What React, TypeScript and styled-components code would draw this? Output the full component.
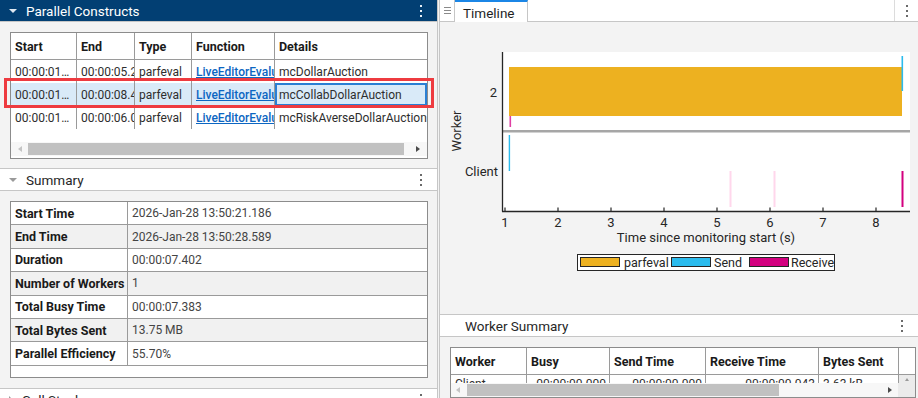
import React from 'react';
import styled, { createGlobalStyle } from 'styled-components';

const GlobalStyle = createGlobalStyle`
  html, body { margin: 0; padding: 0; background: #f3f3f3; overflow: hidden; }
  body { font-family: Roboto, "Liberation Sans", Arial, sans-serif; color: #212121; }
  * { box-sizing: border-box; }
`;

const Window = styled.div`
  display: flex;
  width: 918px;
  height: 398px;
  overflow: hidden;
  background: #f3f3f3;
`;

const LeftPanel = styled.div`
  width: 438px;
  flex-shrink: 0;
  display: flex;
  flex-direction: column;
  border-right: 1px solid #c6c6c6;
`;

const RightPanel = styled.div`
  flex: 1;
  margin-left: 1px;
  display: flex;
  flex-direction: column;
  border-left: 1px solid #c6c6c6;
  min-width: 0;
`;

const SectionHeader = styled.div<{ $active?: boolean }>`
  height: ${p => (p.$active ? 22 : 23)}px;
  flex-shrink: 0;
  display: flex;
  align-items: center;
  padding: 0 14px 0 9px;
  gap: 9px;
  background: ${p => (p.$active ? '#023f73' : '#ffffff')};
  color: ${p => (p.$active ? '#ffffff' : '#262626')};
  border-top: ${p => (p.$active ? 'none' : '1px solid #c6c6c6')};
  border-bottom: 1px solid #c6c6c6;
  font-size: 13.5px;
`;

const Title = styled.span<{ $indent?: number }>`
  flex: 1;
  padding-left: ${p => p.$indent ?? 0}px;
  white-space: nowrap;
`;

const Body = styled.div<{ $h?: number }>`
  position: relative;
  height: ${p => (p.$h ? `${p.$h}px` : 'auto')};
  flex-shrink: 0;
  padding: 10px 0 0 10px;
`;

const TableBox = styled.div<{ $w: number }>`
  width: ${p => p.$w}px;
  background: #ffffff;
  border: 1px solid #8c8c8c;
  font-size: 12px;
  overflow: hidden;
`;

const Row = styled.div<{ $cols: string; $h: number; $line?: boolean; $bg?: string }>`
  display: grid;
  grid-template-columns: ${p => p.$cols};
  height: ${p => p.$h}px;
  background: ${p => p.$bg ?? 'transparent'};
  border-bottom: ${p => (p.$line ? '1px solid #9a9a9a' : 'none')};
`;

const Cell = styled.div<{
  $head?: boolean;
  $right?: boolean;
  $last?: boolean;
  $focus?: boolean;
  $muted?: boolean;
  $clipTop?: boolean;
}>`
  display: flex;
  align-items: ${p => (p.$clipTop ? 'flex-start' : 'center')};
  justify-content: ${p => (p.$right ? 'flex-end' : 'flex-start')};
  padding: ${p => (p.$clipTop ? '2px 3px 0 4px' : '0 3px 0 4px')};
  overflow: hidden;
  white-space: nowrap;
  font-size: ${p => (p.$head ? '12.5px' : '12px')};
  font-weight: ${p => (p.$head ? 700 : 400)};
  color: ${p => (p.$head ? '#1a1a1a' : p.$muted ? '#444444' : '#2e2e2e')};
  border-right: ${p => (p.$last ? 'none' : '1px solid #9a9a9a')};
  outline: ${p => (p.$focus ? '2px solid #2a7fd4' : 'none')};
  outline-offset: -2px;
`;

const Link = styled.span`
  color: #0c66c2;
  text-decoration: underline;
  font-weight: 500;
`;

const Filler = styled.div<{ $h: number }>`
  height: ${p => p.$h}px;
`;

const HScroll = styled.div`
  position: relative;
  height: 14px;
  background: #f7f7f7;
  margin-bottom: 2px;
`;

const Thumb = styled.div<{ $left: number; $width: number }>`
  position: absolute;
  top: 1px;
  bottom: 1px;
  left: ${p => p.$left}px;
  width: ${p => p.$width}px;
  background: #c1c1c1;
`;

const Arrow = styled.div<{ $dir: 'left' | 'right'; $off: number; $dim?: boolean }>`
  position: absolute;
  top: 4px;
  ${p => (p.$dir === 'right' ? `right: ${p.$off}px;` : `left: ${p.$off}px;`)}
  width: 0;
  height: 0;
  border-style: solid;
  border-color: transparent;
  ${p =>
    p.$dir === 'left'
      ? `border-width: 3.5px 4px 3.5px 0; border-right-color: ${p.$dim ? '#c4c4c4' : '#5e5e5e'};`
      : `border-width: 3.5px 0 3.5px 4px; border-left-color: ${p.$dim ? '#c4c4c4' : '#4a4a4a'};`}
`;

const UpArrow = styled.div`
  margin: 3px auto 0;
  width: 0;
  height: 0;
  border-style: solid;
  border-color: transparent;
  border-width: 0 2.5px 3px 2.5px;
  border-bottom-color: #9a9a9a;
`;

const Highlight = styled.div`
  position: absolute;
  left: 4px;
  top: 56px;
  width: 430px;
  height: 30px;
  border: 3px solid #ee3b40;
  pointer-events: none;
`;

const Caret = styled.span<{ $open: boolean; $color: string }>`
  width: 0;
  height: 0;
  border-style: solid;
  border-color: transparent;
  ${p =>
    p.$open
      ? `border-width: 4px 4px 0 4px; border-top-color: ${p.$color};`
      : `border-width: 4px 0 4px 4px; border-left-color: ${p.$color};`}
  margin-top: 1px;
`;

const Kebab = ({ color }: { color: string }) => (
  <svg width="4" height="14" viewBox="0 0 4 14">
    <rect x="1" y="1" width="2" height="2" fill={color} />
    <rect x="1" y="6" width="2" height="2" fill={color} />
    <rect x="1" y="11" width="2" height="2" fill={color} />
  </svg>
);

/* summary table */
const SumRow = styled.div<{ $alt?: boolean }>`
  display: grid;
  grid-template-columns: 117px 1fr;
  height: 23.4px;
  border-bottom: 1px solid #9a9a9a;
  background: ${p => (p.$alt ? '#f1f1f1' : '#ffffff')};
`;

/* right panel */
const TabStrip = styled.div`
  height: 22px;
  flex-shrink: 0;
  display: flex;
  background: #ffffff;
  border-bottom: 1px solid #c6c6c6;
`;

const MenuCell = styled.div`
  width: 15px;
  display: flex;
  align-items: center;
  justify-content: center;
  border-right: 1px solid #c6c6c6;
`;

const Tab = styled.div`
  width: 73px;
  height: 22px;
  border-top: 2px solid #1b86e6;
  border-right: 1px solid #c6c6c6;
  background: #ffffff;
  font-size: 13.5px;
  padding: 1px 0 0 8px;
  display: flex;
  align-items: center;
  color: #1f1f1f;
`;

const StripSpace = styled.div`
  flex: 1;
`;

const StripTool = styled.div`
  width: 24px;
  border-left: 1px solid #dcdcdc;
  display: flex;
  align-items: center;
  justify-content: center;
`;

const ChartArea = styled.div`
  height: 292px;
  flex-shrink: 0;
  background: #f3f3f3;
`;

const Corner = styled.div`
  background: #ebebeb;
`;

const tickTimes = [1, 2, 3, 4, 5, 6, 7, 8];
const tx = (t: number) => 65 + (t - 1) * 53;

function Timeline() {
  const font = 'Roboto, "Liberation Sans", Arial, sans-serif';
  return (
    <svg width="478" height="292" viewBox="0 0 478 292" fontFamily={font}>
      <rect x="62" y="30" width="408" height="159" fill="#ffffff" />
      {/* worker 2 */}
      <rect x="69" y="45" width="393" height="49" fill="#edb120" />
      <rect x="461.5" y="34" width="1.6" height="35" fill="#2bbbed" />
      <rect x="69.5" y="94" width="1.6" height="11" fill="#df3fa3" />
      <rect x="62" y="108" width="408" height="2.5" fill="#a6a6a6" />
      {/* client */}
      <rect x="68.7" y="113" width="1.4" height="36" fill="#2bbbed" />
      <rect x="289.5" y="149" width="2" height="36" fill="#ffd7ec" />
      <rect x="333.5" y="149" width="2" height="36" fill="#ffd7ec" />
      <rect x="461.5" y="149" width="2" height="36" fill="#d3007f" />
      {/* axes */}
      <line x1="62.5" y1="30" x2="62.5" y2="189.5" stroke="#262626" strokeWidth="1.3" />
      <line x1="62" y1="189.5" x2="470" y2="189.5" stroke="#262626" strokeWidth="1.3" />
      {tickTimes.map(t => (
        <g key={t}>
          <line x1={tx(t)} y1="185.5" x2={tx(t)} y2="189" stroke="#262626" strokeWidth="1.2" />
          <text x={tx(t)} y="205" fontSize="13" textAnchor="middle" fill="#262626">
            {t}
          </text>
        </g>
      ))}
      <text x="57" y="75" fontSize="13" textAnchor="end" fill="#262626">2</text>
      <text x="58" y="154" fontSize="13" textAnchor="end" fill="#262626">Client</text>
      <text x="0" y="0" fontSize="13" textAnchor="middle" fill="#262626" transform="translate(21 109) rotate(-90)">
        Worker
      </text>
      <text x="266" y="220" fontSize="13" textAnchor="middle" fill="#262626">
        Time since monitoring start (s)
      </text>
      {/* legend */}
      <rect x="137.5" y="232.5" width="257" height="16" fill="#ffffff" stroke="#262626" strokeWidth="1" />
      <rect x="140.5" y="235.5" width="39" height="9" fill="#edb120" stroke="#262626" />
      <text x="184" y="245" fontSize="12.5" fill="#262626">parfeval</text>
      <rect x="231.5" y="235.5" width="39" height="9" fill="#2bbbed" stroke="#262626" />
      <text x="274" y="245" fontSize="12.5" fill="#262626">Send</text>
      <rect x="309.5" y="235.5" width="39" height="9" fill="#d3007f" stroke="#262626" />
      <text x="351" y="245" fontSize="12.5" fill="#262626">Receive</text>
    </svg>
  );
}

const constructCols = '66px 58px 57px 83px 1fr';
const constructs = [
  { start: '00:00:01…', end: '00:00:05.204', details: 'mcDollarAuction' },
  { start: '00:00:01…', end: '00:00:08.416', details: 'mcCollabDollarAuction', selected: true },
  { start: '00:00:01…', end: '00:00:06.071', details: 'mcRiskAverseDollarAuction' },
];

const summary: [string, string][] = [
  ['Start Time', '2026-Jan-28 13:50:21.186'],
  ['End Time', '2026-Jan-28 13:50:28.589'],
  ['Duration', '00:00:07.402'],
  ['Number of Workers', '1'],
  ['Total Busy Time', '00:00:07.383'],
  ['Total Bytes Sent', '13.75 MB'],
  ['Parallel Efficiency', '55.70%'],
];

const workerCols = '76px 83px 96px 113px 80px 1fr';

export default function App() {
  return (
    <>
      <GlobalStyle />
      <Window>
        <LeftPanel>
          <SectionHeader $active>
            <Caret $open $color="#dfe8f1" />
            <Title>Parallel Constructs</Title>
            <Kebab color="#e6eef6" />
          </SectionHeader>
          <Body $h={146}>
            <TableBox $w={418}>
              <Row $cols={constructCols} $h={27} $line>
                <Cell $head>Start</Cell>
                <Cell $head>End</Cell>
                <Cell $head>Type</Cell>
                <Cell $head>Function</Cell>
                <Cell $head $last>Details</Cell>
              </Row>
              {constructs.map((c, i) => (
                <Row key={i} $cols={constructCols} $h={23} $bg={c.selected ? '#d9eaf8' : undefined}>
                  <Cell>{c.start}</Cell>
                  <Cell>{c.end}</Cell>
                  <Cell>parfeval</Cell>
                  <Cell><Link>LiveEditorEvaluationHelper</Link></Cell>
                  <Cell $last $focus={c.selected}>{c.details}</Cell>
                </Row>
              ))}
              <Filler $h={13} />
              <HScroll>
                <Arrow $dir="left" $off={7} $dim />
                <Thumb $left={17} $width={376} />
                <Arrow $dir="right" $off={7} />
              </HScroll>
            </TableBox>
            <Highlight />
          </Body>
          <SectionHeader>
            <Caret $open $color="#9a9a9a" />
            <Title>Summary</Title>
            <Kebab color="#6a6a6a" />
          </SectionHeader>
          <Body $h={197}>
            <TableBox $w={418}>
              {summary.map(([k, v], i) => (
                <SumRow key={k} $alt={i % 2 === 1}>
                  <Cell $head>{k}</Cell>
                  <Cell $last $muted>{v}</Cell>
                </SumRow>
              ))}
              <Filler $h={11} />
            </TableBox>
          </Body>
          <SectionHeader>
            <Caret $open={false} $color="#9a9a9a" />
            <Title>Call Stack</Title>
            <Kebab color="#6a6a6a" />
          </SectionHeader>
        </LeftPanel>
        <RightPanel>
          <TabStrip>
            <MenuCell>
              <svg width="7" height="7" viewBox="0 0 7 7">
                <rect x="0" y="0" width="7" height="1" fill="#8a8a8a" />
                <rect x="0" y="3" width="7" height="1" fill="#8a8a8a" />
                <rect x="0" y="6" width="7" height="1" fill="#8a8a8a" />
              </svg>
            </MenuCell>
            <Tab>Timeline</Tab>
            <StripSpace />
            <StripTool>
              <Kebab color="#6a6a6a" />
            </StripTool>
          </TabStrip>
          <ChartArea>
            <Timeline />
          </ChartArea>
          <SectionHeader>
            <Title $indent={16}>Worker Summary</Title>
            <Kebab color="#6a6a6a" />
          </SectionHeader>
          <Body>
            <TableBox $w={466}>
              <Row $cols={workerCols} $h={27} $line>
                <Cell $head>Worker</Cell>
                <Cell $head>Busy</Cell>
                <Cell $head>Send Time</Cell>
                <Cell $head>Receive Time</Cell>
                <Cell $head>Bytes Sent</Cell>
                <Cell $head $last />
              </Row>
              <Row $cols={workerCols} $h={8}>
                <Cell $clipTop>Client</Cell>
                <Cell $clipTop $right>00:00:00.000</Cell>
                <Cell $clipTop $right>00:00:00.000</Cell>
                <Cell $clipTop $right>00:00:00.043</Cell>
                <Cell $clipTop>3.63 kB</Cell>
                <Corner>
                  <UpArrow />
                </Corner>
              </Row>
              <Row $cols="447px 1fr" $h={14}>
                <HScroll>
                  <Arrow $dir="left" $off={5} $dim />
                  <Thumb $left={16} $width={312} />
                  <Arrow $dir="right" $off={6} />
                </HScroll>
                <Corner />
              </Row>
            </TableBox>
          </Body>
        </RightPanel>
      </Window>
    </>
  );
}
